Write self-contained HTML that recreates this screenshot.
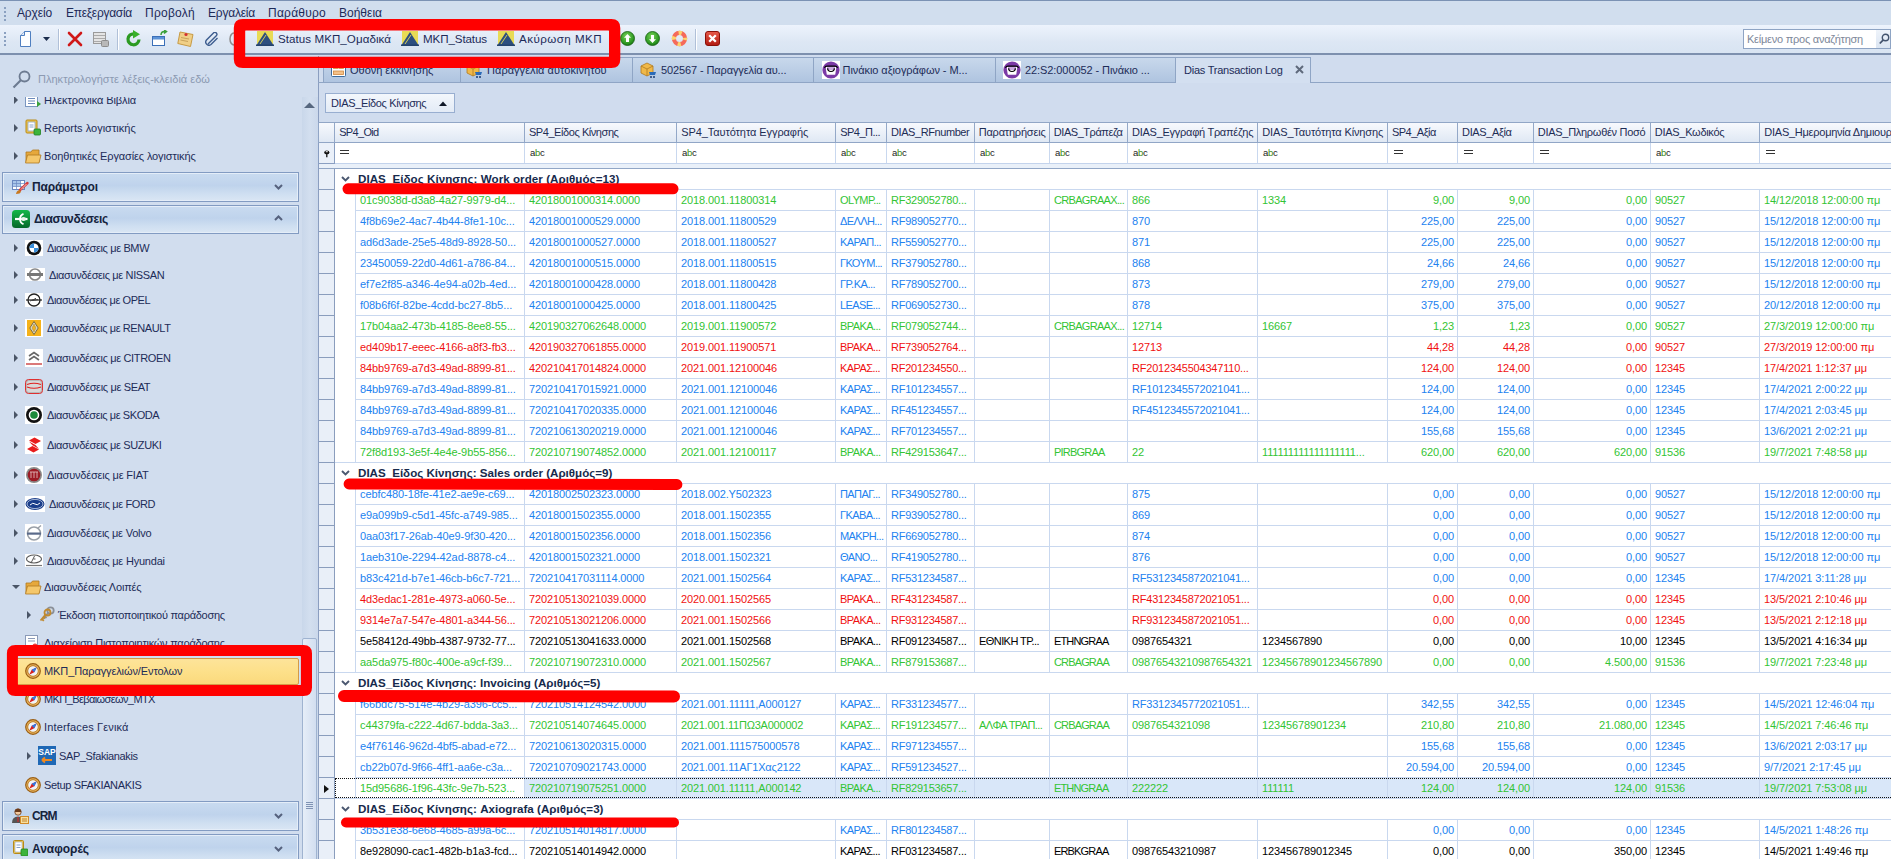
<!DOCTYPE html><html><head><meta charset="utf-8"><style>
*{box-sizing:border-box;margin:0;padding:0}
html,body{width:1891px;height:859px;overflow:hidden}
body{position:relative;background:#d0dcee;font-family:"Liberation Sans",sans-serif;font-size:11px;color:#1e2a3c}
.abs{position:absolute}
#menubar{position:absolute;left:0;top:0;width:1891px;height:25px;background:#d1deee;border-top:1px solid #7b92b4}
.mi{position:absolute;top:5px;font-size:12px;color:#1d2a58;white-space:nowrap;line-height:15px}
.grip{position:absolute;width:2px;background:repeating-linear-gradient(#8aa0c0 0 2px,transparent 2px 4px)}
#toolbar{position:absolute;left:0;top:25px;width:1891px;height:30px;background:linear-gradient(#edf3fc,#dde7f4 60%,#d8e4f2);border-bottom:2px solid #7d90ae}
.tsep{position:absolute;top:4px;width:1px;height:21px;background:#b0c0d8;box-shadow:1px 0 0 #fff}
.tbtxt{position:absolute;top:6px;font-size:11.6px;color:#1d2a58;white-space:nowrap;line-height:15px}
#sidebar{position:absolute;left:0;top:56px;width:318px;height:803px;background:#d1ddee}
.sbt{position:absolute;white-space:nowrap;color:#1d2c58;font-size:11px;line-height:14px}
.arr{position:absolute;width:0;height:0;border-top:4px solid transparent;border-bottom:4px solid transparent;border-left:4px solid #4a5566}
.arrd{position:absolute;width:0;height:0;border-left:4px solid transparent;border-right:4px solid transparent;border-top:4px solid #4a5566}
.nbg{position:absolute;left:2px;width:297px;background:linear-gradient(#c9dbf0 0%,#bfd3ec 45%,#cfdff1 75%,#dae6f4 100%);border:1px solid #829bc2;box-shadow:inset 1px 1px 0 #e4edf8,inset -1px -1px 0 #e4edf8}
.nbg .t{position:absolute;top:7px;font-weight:bold;font-size:11.6px;color:#15233d;white-space:nowrap;line-height:14px}
.chevd{position:absolute;width:5px;height:5px;border-right:2px solid #56627e;border-bottom:2px solid #56627e;transform:rotate(45deg)}
.chevu{position:absolute;width:5px;height:5px;border-left:2px solid #56627e;border-top:2px solid #56627e;transform:rotate(45deg)}
#tabs{position:absolute;left:318px;top:56px;width:1573px;height:27px}
.tab{position:absolute;top:1px;height:25px;background:linear-gradient(#c8d8ec,#afc4e0);border:1px solid #8fa5c5;border-bottom:none;white-space:nowrap;font-size:11px;color:#1d2c58;line-height:14px}
.tab.act{background:#d3dff0;height:26px}
.tab span{position:absolute;top:5px}
#tabline{position:absolute;left:318px;top:82px;width:1573px;height:1px;background:#8fa5c5}
#vline{position:absolute;left:318px;top:56px;width:1px;height:803px;background:#8b9ec0}
#grpbtn{position:absolute;left:325px;top:93px;width:130px;height:20px;border:1px solid #98aed0;background:linear-gradient(#f3f7fc,#e3ebf6)}
#grpbtn span{position:absolute;left:5px;top:3px;font-size:11px;color:#1d2c58;white-space:nowrap;letter-spacing:-0.35px}
#grid{position:absolute;left:319px;top:122px;width:1572px;height:737px;background:#fff}
#hdr{position:absolute;left:318px;top:122px;width:1573px;height:21px;border-top:1px solid #91a6c6;border-bottom:1px solid #91a6c6;background:linear-gradient(#f7f9fd,#dfe8f4)}
.hc{position:absolute;top:0;height:19px;border-left:1px solid #93a8c8;font-size:11px;color:#1e2d55;white-space:nowrap;overflow:hidden;line-height:19px;padding-left:4px;letter-spacing:-0.45px}
#frow{position:absolute;left:318px;top:143px;width:1573px;height:21px;background:#fff;border-bottom:1px solid #c3d3ec}
.fc{position:absolute;top:0;height:20px;border-left:1px solid #c9d8ef;white-space:nowrap;overflow:hidden;padding-left:4px}
.abc{position:absolute;top:5px;left:5px;font-size:9.5px;color:#222;letter-spacing:-0.3px;line-height:10px}
.abc b{font-weight:normal;color:#3a8a10}
.eq{position:absolute;top:7px;left:6px;width:9px;height:4px;border-top:1px solid #333;border-bottom:1px solid #333}
#band{position:absolute;left:319px;top:164px;width:1572px;height:5px;background:#e9f0f9;border-bottom:1px solid #91a6c6}
.grow{position:absolute;left:335px;width:1556px;height:21px;background:#fff}
.grow.ng:before{content:'';position:absolute;left:0;right:0;top:-1px;height:1px;background:#c9d8ef}
.grow:after{content:'';position:absolute;left:20px;right:0;bottom:0;height:1px;background:#c9d8ef}
.grow .gtxt{position:absolute;left:23px;top:3px;font-weight:bold;color:#172a4c;font-size:11.6px;white-space:nowrap;line-height:14px}
.grow .chev{position:absolute;left:6px;top:7px;width:9px;height:6px}
.drow{position:absolute;left:355px;width:1536px;height:21px;border-bottom:1px solid #c9d8ef;background:#fff}
.cell{position:absolute;top:0;height:20px;border-left:1px solid #c9d8ef;white-space:nowrap;overflow:hidden;line-height:20px;padding-left:4px;padding-right:3px}
.cell.r{text-align:right}
.cell.hl{background:#d9e7f9}
.drow.foc{border-bottom:none}
.focline{position:absolute;left:335px;width:1556px;height:1px;border-top:1px dotted #111}
.focside{position:absolute;left:335px;width:1px;height:20px;border-left:1px dotted #111}
.ind{position:absolute;left:319px;width:16px;height:21px;background:#e9eff8;border-bottom:1px solid #8a9dbd;border-right:1px solid #8a9dbd}

.nbt{font-weight:bold;font-size:12px;color:#15233d;white-space:nowrap;line-height:14px}
</style></head><body><div id="menubar">
<div class="grip" style="left:4px;top:6px;height:15px"></div>
<div class="mi" style="left:17px;letter-spacing:-0.138px">Αρχείο</div>
<div class="mi" style="left:66px;letter-spacing:-0.286px">Επεξεργασία</div>
<div class="mi" style="left:145px;letter-spacing:0.259px">Προβολή</div>
<div class="mi" style="left:208px;letter-spacing:-0.217px">Εργαλεία</div>
<div class="mi" style="left:268px;letter-spacing:0.236px">Παράθυρο</div>
<div class="mi" style="left:339px;letter-spacing:0.002px">Βοήθεια</div>
</div>
<div id="toolbar">
<div class="grip" style="left:4px;top:7px;height:16px"></div>
</div>
<svg class="abs" style="left:18px;top:31px" width="15" height="16" viewBox="0 0 15 16"><path d="M2.5 4.5 L6.5 0.5 H12.5 V15.5 H2.5 Z" fill="#fdfeff" stroke="#4f7fc0"/><path d="M2.5 4.5 H6.5 V0.5" fill="#dfe9f7" stroke="#4f7fc0"/></svg>
<svg class="abs" style="left:43px;top:37px" width="7" height="4" viewBox="0 0 7 4"><path d="M0 0 H7 L3.5 4 Z" fill="#1b2d4d"/></svg>
<div class="tsep" style="left:58px;top:29px"></div>
<svg class="abs" style="left:67px;top:31px" width="16" height="16" viewBox="0 0 16 16"><path d="M2 2 L14 14 M14 2 L2 14" stroke="#d01818" stroke-width="2.6" stroke-linecap="round"/></svg>
<svg class="abs" style="left:93px;top:31px" width="16" height="16" viewBox="0 0 16 16"><rect x="0.5" y="1.5" width="12" height="11" fill="#e4e4e4" stroke="#9a9a9a"/><path d="M1 4.5 H12 M1 7.5 H12 M1 10.5 H12" stroke="#aaa"/><rect x="8.5" y="9.5" width="7" height="6" rx="1" fill="#b8b8b8" stroke="#8c8c8c"/></svg>
<div class="tsep" style="left:117px;top:29px"></div>
<svg class="abs" style="left:125px;top:30px" width="18" height="18" viewBox="0 0 18 18"><path d="M14 9.5 A5.5 5.5 0 1 1 9 3.8" fill="none" stroke="#2b9a22" stroke-width="3.2"/><path d="M8 0 L15 4.2 L8 8.5 Z" fill="#38b02a"/></svg>
<svg class="abs" style="left:152px;top:30px" width="17" height="17" viewBox="0 0 17 17"><rect x="0.5" y="6.5" width="12" height="9" fill="#fff" stroke="#3a6fb8"/><rect x="1" y="7" width="11" height="2.5" fill="#5c92d6"/><path d="M9 5 Q9 1.5 12.5 1.5 H14 M12 0 L14.5 1.5 L12 3.5" fill="none" stroke="#3aa03a" stroke-width="1.5"/></svg>
<svg class="abs" style="left:177px;top:31px" width="17" height="16" viewBox="0 0 17 16"><path d="M3 1 L16 3.5 L13.5 15.5 L0.8 12.5 Z" fill="#f0cf86" stroke="#c69a45"/><path d="M4 6.5 L12 8 M3.5 9 L11 10.5" stroke="#c9a25a"/><circle cx="9" cy="3.5" r="1.6" fill="#d23030"/></svg>
<svg class="abs" style="left:205px;top:32px" width="15" height="14" viewBox="0 0 15 14"><path d="M3 12 L11.5 3.5 A2 2 0 0 0 8.7 0.7 L1.5 8 A3.2 3.2 0 0 0 6 12.5 L12.5 6" fill="none" stroke="#3d5d8f" stroke-width="1.4"/></svg>
<svg class="abs" style="left:229px;top:31px" width="6" height="16" viewBox="0 0 6 16"><ellipse cx="5" cy="8" rx="4" ry="6" fill="none" stroke="#8b8b8b" stroke-width="1.5"/></svg>
<svg class="abs" style="left:256px;top:31px" width="18" height="15" viewBox="0 0 18 15"><rect x="1" y="0" width="16" height="15" fill="#e8db55"/><path d="M0 15 L9 1 L18 15 Z" fill="#2d4f7f"/><path d="M4 13 L10 4" stroke="#e8db55" stroke-width="0.9"/><rect x="0" y="13.5" width="18" height="1.5" fill="#24436d"/></svg>
<div class="tbtxt" style="left:278px;top:31px;letter-spacing:0.05px">Status ΜΚΠ_Ομαδικά</div>
<svg class="abs" style="left:401px;top:31px" width="18" height="15" viewBox="0 0 18 15"><rect x="1" y="0" width="16" height="15" fill="#e8db55"/><path d="M0 15 L9 1 L18 15 Z" fill="#2d4f7f"/><path d="M4 13 L10 4" stroke="#e8db55" stroke-width="0.9"/><rect x="0" y="13.5" width="18" height="1.5" fill="#24436d"/></svg>
<div class="tbtxt" style="left:423px;top:31px;letter-spacing:-0.109px">ΜΚΠ_Status</div>
<svg class="abs" style="left:497px;top:31px" width="18" height="15" viewBox="0 0 18 15"><rect x="1" y="0" width="16" height="15" fill="#e8db55"/><path d="M0 15 L9 1 L18 15 Z" fill="#2d4f7f"/><path d="M4 13 L10 4" stroke="#e8db55" stroke-width="0.9"/><rect x="0" y="13.5" width="18" height="1.5" fill="#24436d"/></svg>
<div class="tbtxt" style="left:519px;top:31px;letter-spacing:0.445px">Ακύρωση ΜΚΠ</div>
<svg class="abs" style="left:620px;top:31px" width="15" height="15" viewBox="0 0 15 15"><defs><radialGradient id="gg" cx="0.45" cy="0.35" r="0.7"><stop offset="0" stop-color="#7ad35a"/><stop offset="0.7" stop-color="#2e9a22"/><stop offset="1" stop-color="#156a10"/></radialGradient></defs><circle cx="7.5" cy="7.5" r="7" fill="url(#gg)" stroke="#15600f" stroke-width="0.8"/><path d="M7.5 3 L11 6.8 H9 V11 H6 V6.8 H4 Z" fill="#fff"/></svg>
<svg class="abs" style="left:645px;top:31px" width="15" height="15" viewBox="0 0 15 15"><circle cx="7.5" cy="7.5" r="7" fill="url(#gg)" stroke="#15600f" stroke-width="0.8"/><path d="M7.5 12 L11 8.2 H9 V4 H6 V8.2 H4 Z" fill="#fff"/></svg>
<svg class="abs" style="left:671px;top:30px" width="17" height="17" viewBox="0 0 17 17"><circle cx="8.5" cy="8.5" r="5.6" fill="none" stroke="#f56a5a" stroke-width="4.2"/><circle cx="8.5" cy="8.5" r="5.6" fill="none" stroke="#fbd46e" stroke-width="4.2" stroke-dasharray="3.2 5.6" stroke-dashoffset="1.6"/></svg>
<div class="tsep" style="left:695px;top:29px"></div>
<svg class="abs" style="left:705px;top:31px" width="15" height="15" viewBox="0 0 15 15"><defs><linearGradient id="rg" x1="0" y1="0" x2="0" y2="1"><stop offset="0" stop-color="#e85a4a"/><stop offset="1" stop-color="#b01a10"/></linearGradient></defs><rect x="0.5" y="0.5" width="14" height="14" rx="2.5" fill="url(#rg)" stroke="#8a1008"/><path d="M4.2 4.2 L10.8 10.8 M10.8 4.2 L4.2 10.8" stroke="#fff" stroke-width="2.3"/></svg>
<div class="abs" style="left:1743px;top:29px;width:134px;height:20px;background:#fff;border:1px solid #8ea4c4"></div>
<div class="abs" style="left:1747px;top:32px;font-size:11px;color:#7d8799;white-space:nowrap;line-height:14px;letter-spacing:-0.24px">Κείμενο προς αναζήτηση</div>
<div class="abs" style="left:1876px;top:29px;width:15px;height:20px;background:linear-gradient(#eef3fa,#dbe5f2);border:1px solid #8ea4c4;border-left:none"></div>
<svg class="abs" style="left:1879px;top:33px" width="11" height="12" viewBox="0 0 11 12"><circle cx="6.5" cy="4.5" r="3.2" fill="none" stroke="#44546e" stroke-width="1.4"/><path d="M4.3 6.8 L0.8 10.5" stroke="#44546e" stroke-width="1.8"/></svg>
<div id="sidebar"></div>
<svg class="abs" style="left:12px;top:70px" width="20" height="19" viewBox="0 0 20 19"><circle cx="12.5" cy="6.5" r="5" fill="none" stroke="#6d7b91" stroke-width="1.8"/><path d="M9 10 L1.5 17.5" stroke="#6d7b91" stroke-width="2.2"/></svg>
<div class="sbt" style="left:38px;top:72px;letter-spacing:0.02px;color:#8c9ab2">Πληκτρολογήστε λέξεις-κλειδιά εδώ</div>
<div class="abs" style="left:302px;top:97px;width:16px;height:762px;background:linear-gradient(90deg,#c9d7ea,#d3dfef 50%,#cbd8eb)"></div>
<svg class="abs" style="left:304px;top:102px" width="11" height="7" viewBox="0 0 11 7"><path d="M0 6 L5.5 0.5 L11 6 Z" fill="#56677f"/></svg>
<div class="abs" style="left:302px;top:638px;width:15px;height:230px;background:linear-gradient(90deg,#e6eef8,#d2def0);border:1px solid #9fb3d0;border-radius:2px"></div>
<div class="abs" style="left:306px;top:802px;width:7px;height:1px;background:#7f93b4"></div>
<div class="abs" style="left:306px;top:804px;width:7px;height:1px;background:#7f93b4"></div>
<div class="abs" style="left:306px;top:806px;width:7px;height:1px;background:#7f93b4"></div>
<div class="abs" style="left:306px;top:808px;width:7px;height:1px;background:#7f93b4"></div>
<div class="abs" style="left:0;top:97px;width:300px;height:75px;overflow:hidden">
<div class="arr" style="left:14px;top:-1px"></div>
<svg class="abs" style="left:25px;top:-2px" width="17" height="14" viewBox="0 0 17 14"><rect x="0.5" y="0.5" width="12" height="11" fill="#fff" stroke="#7a96c0"/><path d="M3 3.5 H10 M3 6 H10 M3 8.5 H10" stroke="#6b8abb"/><path d="M12 6 L16 9 L12 12 Z" fill="#3aa23a"/></svg>
<div class="sbt" style="left:44px;top:-4px;letter-spacing:-0.095px">Ηλεκτρονικά Βιβλία</div>
</div>
<div class="arr" style="left:14px;top:124px"></div>
<svg class="abs" style="left:25px;top:119px" width="16" height="17" viewBox="0 0 16 17"><rect x="1" y="1" width="11" height="13" rx="1" fill="#f2c64a" stroke="#b68a1a"/><rect x="3" y="3" width="7" height="9" fill="#fff" stroke="#8aa0c0" stroke-width="0.8"/><path d="M4.5 6 H8.5 M4.5 8 H8.5" stroke="#6b8abb" stroke-width="0.8"/><rect x="9" y="10" width="6.5" height="6" rx="1" fill="#3cb43c" stroke="#1f801f" stroke-width="0.8"/></svg>
<div class="sbt" style="left:44px;top:121px;letter-spacing:0.013px">Reports λογιστικής</div>
<div class="arr" style="left:14px;top:152px"></div>
<svg class="abs" style="left:25px;top:148px" width="17" height="16" viewBox="0 0 17 16"><path d="M1 4 H6 L7.5 2 H14 V14 H1 Z" fill="#e6a83c" stroke="#b07820" stroke-width="0.8"/><path d="M2.5 7 H16 L14 15 H0.5 Z" fill="#f5c76a" stroke="#b07820" stroke-width="0.8"/></svg>
<div class="sbt" style="left:44px;top:149px;letter-spacing:-0.12px">Βοηθητικές Εργασίες λογιστικής</div>
<div class="nbg" style="top:172px;height:30px"></div><svg class="abs" style="left:12px;top:180px" width="17" height="15" viewBox="0 0 17 15"><rect x="0.5" y="0.5" width="12" height="9" fill="#fff" stroke="#6a88c0"/><rect x="1" y="1" width="7.5" height="5.5" fill="#a9c6ea"/><path d="M0.5 3.5 H12.5 M0.5 6.5 H12.5 M4.5 0.5 V9.5 M8.5 0.5 V9.5" stroke="#6a88c0" stroke-width="0.7"/><path d="M8 10 L15.5 3" stroke="#d63a3a" stroke-width="2.4" stroke-linecap="round"/><path d="M9 9.5 L14.5 4" stroke="#fff" stroke-width="0.7"/><path d="M4 14 Q4.5 10.5 7.5 10 L9 11.5 Q8.5 14 4 14 Z" fill="#c8781e"/></svg><div class="abs nbt" style="left:32px;top:180px;letter-spacing:-0.133px;left:32px">Παράμετροι</div><svg class="abs" style="left:274px;top:184px" width="9" height="6" viewBox="0 0 9 6"><path d="M1 1 L4.5 4.5 L8 1" fill="none" stroke="#56627e" stroke-width="2"/></svg>
<div class="nbg" style="top:205px;height:29px"></div><svg class="abs" style="left:12px;top:210px" width="18" height="18" viewBox="0 0 18 18"><defs><linearGradient id="dg" x1="0" y1="0" x2="0" y2="1"><stop offset="0" stop-color="#14b848"/><stop offset="1" stop-color="#04682a"/></linearGradient></defs><rect x="0" y="0" width="18" height="18" rx="3.5" fill="url(#dg)"/><path d="M11.5 3.8 A5.6 5.6 0 0 0 11.5 14.2" fill="none" stroke="#fff" stroke-width="1.8"/><path d="M3 9 H15.5" stroke="#fff" stroke-width="2.2"/><ellipse cx="11.5" cy="9" rx="2.6" ry="2" fill="#e8f4ea"/></svg><div class="abs nbt" style="left:32px;top:212px;letter-spacing:-0.281px;left:34px">Διασυνδέσεις</div><svg class="abs" style="left:274px;top:215px" width="9" height="6" viewBox="0 0 9 6"><path d="M1 5 L4.5 1.5 L8 5" fill="none" stroke="#56627e" stroke-width="2"/></svg>
<div class="arr" style="left:14px;top:244px"></div>
<svg class="abs" style="left:25px;top:240px" width="18" height="16" viewBox="0 0 18 16"><rect width="18" height="16" fill="#fff"/><circle cx="9" cy="8" r="7.3" fill="#111"/><circle cx="9" cy="8" r="4.6" fill="#fff"/><path d="M9 8 H4.4 A4.6 4.6 0 0 1 9 3.4 Z M9 8 H13.6 A4.6 4.6 0 0 1 9 12.6 Z" fill="#3a8ed8"/></svg>
<div class="sbt" style="left:47px;top:241px;letter-spacing:-0.367px">Διασυνδέσεις με BMW</div>
<div class="arr" style="left:14px;top:271px"></div>
<svg class="abs" style="left:25px;top:268px" width="20" height="13" viewBox="0 0 20 13"><rect width="20" height="13" fill="#fff"/><circle cx="10" cy="6.5" r="5.5" fill="none" stroke="#888" stroke-width="1.6"/><rect x="2" y="5" width="16" height="3" fill="#777"/></svg>
<div class="sbt" style="left:49px;top:268px;letter-spacing:-0.356px">Διασυνδέσεις με NISSAN</div>
<div class="arr" style="left:14px;top:296px"></div>
<svg class="abs" style="left:25px;top:293px" width="18" height="14" viewBox="0 0 18 14"><rect width="18" height="14" fill="#fff"/><circle cx="9" cy="7" r="6" fill="none" stroke="#222" stroke-width="1.3"/><path d="M1 7 H17" stroke="#222" stroke-width="1.2"/><path d="M5 8 L11 5.5 L8 7.5 L13 6.5" stroke="#444" stroke-width="1"/></svg>
<div class="sbt" style="left:47px;top:293px;letter-spacing:-0.421px">Διασυνδέσεις με OPEL</div>
<div class="arr" style="left:14px;top:324px"></div>
<svg class="abs" style="left:25px;top:319px" width="18" height="18" viewBox="0 0 18 18"><rect width="18" height="18" fill="#fff"/><rect x="2" y="1" width="14" height="16" fill="#f5b21a"/><path d="M9 2.5 L13.2 9 L9 15.5 L4.8 9 Z" fill="#e8e2cc" stroke="#7a6a40" stroke-width="1"/><path d="M9 5 L11 9 L9 13 L7 9 Z" fill="#f5b21a" stroke="#9a8a5a" stroke-width="0.6"/></svg>
<div class="sbt" style="left:47px;top:321px;letter-spacing:-0.405px">Διασυνδέσεις με RENAULT</div>
<div class="arr" style="left:14px;top:354px"></div>
<svg class="abs" style="left:25px;top:349px" width="18" height="18" viewBox="0 0 18 18"><rect width="18" height="18" fill="#fff"/><path d="M4 7 L9 3.5 L14 7 M4 11 L9 7.5 L14 11" stroke="#666" stroke-width="1.6" fill="none"/><path d="M1 15 H17" stroke="#c83030" stroke-width="1.3"/></svg>
<div class="sbt" style="left:47px;top:351px;letter-spacing:-0.36px">Διασυνδέσεις με CITROEN</div>
<div class="arr" style="left:14px;top:383px"></div>
<svg class="abs" style="left:25px;top:379px" width="18" height="15" viewBox="0 0 18 15"><rect x="0.5" y="0.5" width="17" height="14" rx="3" fill="#b8b8b8" stroke="#e03030"/><rect x="2" y="2" width="14" height="11" rx="2" fill="#d8d8d8"/><path d="M2 5.5 Q9 3 16 5.5 M2 8 Q9 10.5 16 8" stroke="#e02020" stroke-width="1.2" fill="none"/></svg>
<div class="sbt" style="left:47px;top:380px;letter-spacing:-0.35px">Διασυνδέσεις με SEAT</div>
<div class="arr" style="left:14px;top:411px"></div>
<svg class="abs" style="left:25px;top:406px" width="18" height="18" viewBox="0 0 18 18"><rect width="18" height="18" fill="#fff"/><circle cx="9" cy="9" r="8" fill="#111"/><circle cx="9" cy="9" r="5.3" fill="#fff"/><circle cx="9" cy="9" r="3.8" fill="#1b8a3a"/></svg>
<div class="sbt" style="left:47px;top:408px;letter-spacing:-0.405px">Διασυνδέσεις με SKODA</div>
<div class="arr" style="left:14px;top:441px"></div>
<svg class="abs" style="left:25px;top:436px" width="18" height="18" viewBox="0 0 18 18"><rect width="18" height="18" fill="#fff"/><path d="M9.5 1.5 L16 5 L10.5 8 L4 4.5 Z M8.5 16.5 L2 13 L7.5 10 L14 13.5 Z M4 5.5 L10.5 9 L14 13 L7.5 9.2 Z" fill="#e81c1c"/></svg>
<div class="sbt" style="left:47px;top:438px;letter-spacing:-0.374px">Διασυνδέσεις με SUZUKI</div>
<div class="arr" style="left:14px;top:471px"></div>
<svg class="abs" style="left:25px;top:466px" width="18" height="18" viewBox="0 0 18 18"><rect width="18" height="18" fill="#fff"/><circle cx="9" cy="9" r="8" fill="#8a8a8a"/><circle cx="9" cy="9" r="6.3" fill="#9c1a24"/><path d="M5 6 H13 M6 6 V12 M9 6 V12 M12 6 V12" stroke="#e8c8c8" stroke-width="0.8"/></svg>
<div class="sbt" style="left:47px;top:468px;letter-spacing:-0.185px">Διασυνδέσεις με FIAT</div>
<div class="arr" style="left:14px;top:500px"></div>
<svg class="abs" style="left:25px;top:496px" width="20" height="16" viewBox="0 0 20 16"><rect width="20" height="16" fill="#fff"/><ellipse cx="10" cy="8" rx="9.5" ry="6" fill="#1a3d8a"/><ellipse cx="10" cy="8" rx="8" ry="4.6" fill="none" stroke="#c8d4ea" stroke-width="0.8"/><path d="M5 9 Q8 6 10 8 Q12 10 15 7" stroke="#fff" stroke-width="1" fill="none"/></svg>
<div class="sbt" style="left:49px;top:497px;letter-spacing:-0.362px">Διασυνδέσεις με FORD</div>
<div class="arr" style="left:14px;top:529px"></div>
<svg class="abs" style="left:25px;top:524px" width="18" height="18" viewBox="0 0 18 18"><rect width="18" height="18" fill="#fff"/><circle cx="9" cy="9.5" r="6.5" fill="none" stroke="#9aa0a8" stroke-width="1.6"/><rect x="2" y="8.5" width="14" height="2.2" fill="#5a6a8a"/><path d="M13 4 L16 1.5" stroke="#9aa0a8" stroke-width="1.4"/></svg>
<div class="sbt" style="left:47px;top:526px;letter-spacing:-0.228px">Διασυνδέσεις με Volvo</div>
<div class="arr" style="left:14px;top:557px"></div>
<svg class="abs" style="left:25px;top:554px" width="18" height="13" viewBox="0 0 18 13"><rect width="18" height="13" fill="#fff"/><ellipse cx="9" cy="5" rx="7.5" ry="4" fill="none" stroke="#555" stroke-width="1.1"/><path d="M6.5 8 L9.5 2 M8.5 5 H10.5" stroke="#555" stroke-width="1"/><path d="M1 11.5 H17" stroke="#777" stroke-width="1.2"/></svg>
<div class="sbt" style="left:47px;top:554px;letter-spacing:-0.21px">Διασυνδέσεις με Hyundai</div>
<div class="arrd" style="left:12px;top:585px"></div>
<svg class="abs" style="left:25px;top:580px" width="17" height="15" viewBox="0 0 17 15"><path d="M1 3 H6 L7.5 1 H14 V13 H1 Z" fill="#e6a83c" stroke="#b07820" stroke-width="0.8"/><path d="M2.5 6 H16 L14 14 H0.5 Z" fill="#f5c76a" stroke="#b07820" stroke-width="0.8"/></svg>
<div class="sbt" style="left:44px;top:580px;letter-spacing:-0.194px">Διασυνδέσεις Λοιπές</div>
<div class="arr" style="left:27px;top:611px"></div>
<svg class="abs" style="left:39px;top:606px" width="16" height="17" viewBox="0 0 16 17"><circle cx="11.5" cy="4.5" r="3.2" fill="none" stroke="#8a8f98" stroke-width="1.8"/><path d="M9.3 6.8 L4 12.5 M6 10.5 L7.5 12" stroke="#8a8f98" stroke-width="1.8"/><circle cx="8.5" cy="6.5" r="3" fill="none" stroke="#c08a30" stroke-width="1.8"/><path d="M6.5 8.7 L1.5 14.5 M3 13 L4.8 14.8 M4.5 11 L6 12.5" stroke="#c08a30" stroke-width="1.8"/></svg>
<div class="sbt" style="left:58px;top:608px;letter-spacing:-0.28px">Έκδοση πιστοποιητικού παράδοσης</div>
<svg class="abs" style="left:25px;top:635px" width="15" height="14" viewBox="0 0 15 14"><rect x="0.5" y="0.5" width="12" height="13" fill="#fff" stroke="#8a9ab8"/><path d="M3 3.5 H10 M3 6 H10" stroke="#8a9ab8"/><circle cx="10" cy="11" r="2.5" fill="#e84040"/></svg>
<div class="sbt" style="left:44px;top:636px;letter-spacing:-0.25px">Διαχείριση Πιστοποιητικών παράδοσης</div>
<div class="abs" style="left:14px;top:656px;width:288px;height:30px;background:#cfe0f2"></div>
<div class="abs" style="left:14px;top:658px;width:285px;height:27px;background:linear-gradient(#fde49a,#fde08a 50%,#fbd97c);border:1px solid #d49a48;border-radius:2px"></div>
<svg class="abs" style="left:25px;top:663px" width="16" height="16" viewBox="0 0 16 16"><circle cx="8" cy="8" r="7.3" fill="#e9b45a" stroke="#9a5e14" stroke-width="1.2"/><circle cx="8" cy="8" r="5.3" fill="#fff4dc" stroke="#b07424" stroke-width="0.9"/><circle cx="8" cy="8" r="4.2" fill="#eef3fa"/><path d="M11.8 4.2 L9.3 9.3 L4.2 11.8 L6.7 6.7 Z" fill="#d82020"/><path d="M11.8 4.2 L6.7 6.7 L9.3 9.3 Z" fill="#2a7ae8"/></svg>
<div class="sbt" style="left:44px;top:664px;letter-spacing:-0.106px">ΜΚΠ_Παραγγελιών/Εντολων</div>
<svg class="abs" style="left:25px;top:691px" width="16" height="16" viewBox="0 0 16 16"><circle cx="8" cy="8" r="7.3" fill="#e9b45a" stroke="#9a5e14" stroke-width="1.2"/><circle cx="8" cy="8" r="5.3" fill="#fff4dc" stroke="#b07424" stroke-width="0.9"/><circle cx="8" cy="8" r="4.2" fill="#eef3fa"/><path d="M11.8 4.2 L9.3 9.3 L4.2 11.8 L6.7 6.7 Z" fill="#d82020"/><path d="M11.8 4.2 L6.7 6.7 L9.3 9.3 Z" fill="#2a7ae8"/></svg>
<div class="sbt" style="left:44px;top:692px;letter-spacing:-0.602px">ΜΚΠ_Βεβαιώσεων_ΜΤΧ</div>
<svg class="abs" style="left:25px;top:719px" width="16" height="16" viewBox="0 0 16 16"><circle cx="8" cy="8" r="7.3" fill="#e9b45a" stroke="#9a5e14" stroke-width="1.2"/><circle cx="8" cy="8" r="5.3" fill="#fff4dc" stroke="#b07424" stroke-width="0.9"/><circle cx="8" cy="8" r="4.2" fill="#eef3fa"/><path d="M11.8 4.2 L9.3 9.3 L4.2 11.8 L6.7 6.7 Z" fill="#d82020"/><path d="M11.8 4.2 L6.7 6.7 L9.3 9.3 Z" fill="#2a7ae8"/></svg>
<div class="sbt" style="left:44px;top:720px;letter-spacing:0.153px">Interfaces Γενικά</div>
<div class="arr" style="left:27px;top:752px"></div>
<svg class="abs" style="left:38px;top:746px" width="18" height="19" viewBox="0 0 18 19"><rect x="0" y="0" width="18" height="19" fill="#1f68b5"/><text x="9" y="9" font-family="Liberation Sans" font-weight="bold" font-size="8.5" fill="#fff" text-anchor="middle">SAP</text><path d="M4 14 H14 M4 14 L7 11.5 M4 14 L7 16.5" stroke="#f08a20" stroke-width="1.8" fill="none"/></svg>
<div class="sbt" style="left:59px;top:749px;letter-spacing:-0.386px">SAP_Sfakianakis</div>
<svg class="abs" style="left:25px;top:777px" width="16" height="16" viewBox="0 0 16 16"><circle cx="8" cy="8" r="7.3" fill="#e9b45a" stroke="#9a5e14" stroke-width="1.2"/><circle cx="8" cy="8" r="5.3" fill="#fff4dc" stroke="#b07424" stroke-width="0.9"/><circle cx="8" cy="8" r="4.2" fill="#eef3fa"/><path d="M11.8 4.2 L9.3 9.3 L4.2 11.8 L6.7 6.7 Z" fill="#d82020"/><path d="M11.8 4.2 L6.7 6.7 L9.3 9.3 Z" fill="#2a7ae8"/></svg>
<div class="sbt" style="left:44px;top:778px;letter-spacing:-0.35px">Setup SFAKIANAKIS</div>
<div class="nbg" style="top:801px;height:30px"></div><svg class="abs" style="left:12px;top:808px" width="17" height="16" viewBox="0 0 17 16"><circle cx="6" cy="4" r="3.2" fill="#f2c9a0" stroke="#6a3a1a" stroke-width="0.8"/><path d="M6 0.8 A3.2 3.2 0 0 1 9.2 4 H2.8 A3.2 3.2 0 0 1 6 0.8" fill="#6a3a1a"/><path d="M0 15 Q0 8.5 6 8.5 Q12 8.5 12 15 Z" fill="#555"/><path d="M6 9 V14" stroke="#c03030" stroke-width="1.4"/><rect x="8.5" y="8.5" width="8" height="7" fill="#f7e0a0" stroke="#d08a2a"/><path d="M10 11 H15 M10 13 H15" stroke="#c0802a"/></svg><div class="abs nbt" style="left:32px;top:809px;letter-spacing:-0.909px;left:32px">CRM</div><svg class="abs" style="left:274px;top:813px" width="9" height="6" viewBox="0 0 9 6"><path d="M1 1 L4.5 4.5 L8 1" fill="none" stroke="#56627e" stroke-width="2"/></svg>
<div class="nbg" style="top:834px;height:30px"></div><svg class="abs" style="left:13px;top:840px" width="15" height="16" viewBox="0 0 15 16"><rect x="0.5" y="0.5" width="10" height="13" rx="1" fill="#f2c64a" stroke="#b68a1a"/><rect x="2" y="2" width="7" height="10" fill="#fff" stroke="#8aa0c0" stroke-width="0.6"/><path d="M3.5 5 H7.5 M3.5 7.5 H7.5" stroke="#6b8abb" stroke-width="0.8"/><rect x="8" y="9" width="7" height="7" rx="1" fill="#3cb43c" stroke="#1f801f" stroke-width="0.8"/></svg><div class="abs nbt" style="left:32px;top:842px;letter-spacing:-0.033px;left:32px">Αναφορές</div><svg class="abs" style="left:274px;top:846px" width="9" height="6" viewBox="0 0 9 6"><path d="M1 1 L4.5 4.5 L8 1" fill="none" stroke="#56627e" stroke-width="2"/></svg>
<div id="vline"></div>
<div id="tabline"></div>
<div class="tab" style="left:323px;width:138px;top:57px"><span style="left:26px;letter-spacing:-0.016px">Οθόνη εκκίνησης</span></div>
<div class="tab" style="left:460px;width:173px;top:57px"><span style="left:26px;letter-spacing:0.039px">Παραγγελία αυτοκινήτου</span></div>
<div class="tab" style="left:632px;width:182px;top:57px"><span style="left:28px;letter-spacing:-0.113px">502567 - Παραγγελία αυ...</span></div>
<div class="tab" style="left:813px;width:183px;top:57px"><span style="left:28.5px;letter-spacing:-0.066px">Πινάκιο αξιογράφων - Μ...</span></div>
<div class="tab" style="left:995px;width:181px;top:57px"><span style="left:29px;letter-spacing:-0.082px">22:S2:000052 - Πινάκιο ...</span></div>
<div class="tab act" style="left:1175px;width:136px;top:57px"><span style="left:8px;letter-spacing:-0.237px">Dias Transaction Log</span></div>
<svg class="abs" style="left:331px;top:62px" width="15" height="15" viewBox="0 0 15 15"><rect x="0.5" y="0.5" width="14" height="14" rx="1" fill="#fff" stroke="#3d6b9c"/><rect x="2.5" y="3" width="4.5" height="3.5" fill="#f4c088" stroke="#d08840" stroke-width="0.8"/><rect x="8" y="3" width="4.5" height="3.5" fill="#f4c088" stroke="#d08840" stroke-width="0.8"/><rect x="2.5" y="9" width="10" height="3.5" fill="#f4c088" stroke="#d08840" stroke-width="0.8"/></svg>
<svg class="abs" style="left:466px;top:62px" width="17" height="16" viewBox="0 0 17 16"><path d="M1 4 L7 1 L13 4 V11 L7 14 L1 11 Z" fill="#f0b848" stroke="#b07a20" stroke-width="0.8"/><path d="M1 4 L7 7 L13 4 M7 7 V14" stroke="#b07a20" stroke-width="0.8" fill="none"/><path d="M9 10 H16 L15 13 H10 Z" fill="#2a6ab8"/><circle cx="11" cy="15" r="1" fill="#1a3a70"/><circle cx="14" cy="15" r="1" fill="#1a3a70"/></svg>
<svg class="abs" style="left:640px;top:62px" width="17" height="16" viewBox="0 0 17 16"><path d="M1 4 L7 1 L13 4 V11 L7 14 L1 11 Z" fill="#f0b848" stroke="#b07a20" stroke-width="0.8"/><path d="M1 4 L7 7 L13 4 M7 7 V14" stroke="#b07a20" stroke-width="0.8" fill="none"/><path d="M9 10 H16 L15 13 H10 Z" fill="#2a6ab8"/><circle cx="11" cy="15" r="1" fill="#1a3a70"/><circle cx="14" cy="15" r="1" fill="#1a3a70"/></svg>
<svg class="abs" style="left:822px;top:61px" width="18" height="18" viewBox="0 0 18 18"><rect width="18" height="18" fill="#fff"/><circle cx="9" cy="9" r="8.6" fill="#7b3aa6"/><path d="M3.5 5.8 H14.5 L13.2 13.8 H4.8 Z" fill="#fff"/><rect x="5" y="6" width="8" height="3" fill="#c9a8e0"/><path d="M2.6 7 Q3 5.2 5 5.2 H13 Q15 5.2 15.4 7" fill="none" stroke="#000" stroke-width="1.2"/><path d="M5.7 7.3 Q5.7 10.5 9 10.5 Q12.3 10.5 12.3 7.3" fill="none" stroke="#000" stroke-width="1.2"/></svg>
<svg class="abs" style="left:1003px;top:61px" width="18" height="18" viewBox="0 0 18 18"><rect width="18" height="18" fill="#fff"/><circle cx="9" cy="9" r="8.6" fill="#7b3aa6"/><path d="M3.5 5.8 H14.5 L13.2 13.8 H4.8 Z" fill="#fff"/><rect x="5" y="6" width="8" height="3" fill="#c9a8e0"/><path d="M2.6 7 Q3 5.2 5 5.2 H13 Q15 5.2 15.4 7" fill="none" stroke="#000" stroke-width="1.2"/><path d="M5.7 7.3 Q5.7 10.5 9 10.5 Q12.3 10.5 12.3 7.3" fill="none" stroke="#000" stroke-width="1.2"/></svg>
<svg class="abs" style="left:1295px;top:65px" width="9" height="9" viewBox="0 0 9 9"><path d="M1 1 L8 8 M8 1 L1 8" stroke="#5f6a7c" stroke-width="2"/></svg>
<div id="grpbtn"><span style="letter-spacing:-0.36px">DIAS_Είδος Κίνησης</span></div>
<svg class="abs" style="left:439px;top:101px" width="8" height="5" viewBox="0 0 8 5"><path d="M0 5 L4 0.5 L8 5 Z" fill="#101828"/></svg>
<div id="grid"></div>
<div id="hdr">
<div class="hc" style="left:0px;width:16px;border-left:1px solid #91a6c6"></div>
<div class="hc" style="left:16px;width:190px;letter-spacing:-0.676px;padding-left:4.2px">SP4_Oid</div>
<div class="hc" style="left:206px;width:152px;letter-spacing:-0.43px;padding-left:3.9px">SP4_Είδος Κίνησης</div>
<div class="hc" style="left:358px;width:159px;letter-spacing:-0.077px;padding-left:4.2px">SP4_Ταυτότητα Εγγραφής</div>
<div class="hc" style="left:517px;width:51px;letter-spacing:-0.554px;padding-left:4.3px">SP4_Π...</div>
<div class="hc" style="left:568px;width:88px;letter-spacing:-0.42px;padding-left:4.0px">DIAS_RFnumber</div>
<div class="hc" style="left:656px;width:75px;letter-spacing:-0.2px;padding-left:3.7px">Παρατηρήσεις</div>
<div class="hc" style="left:731px;width:78px;letter-spacing:-0.451px;padding-left:3.8px">DIAS_Τράπεζα</div>
<div class="hc" style="left:809px;width:130px;letter-spacing:-0.27px;padding-left:4.1px">DIAS_Εγγραφή Τραπέζης</div>
<div class="hc" style="left:939px;width:130px;letter-spacing:-0.121px;padding-left:4.2px">DIAS_Ταυτότητα Κίνησης</div>
<div class="hc" style="left:1069px;width:70px;letter-spacing:-0.498px;padding-left:3.9px">SP4_Αξία</div>
<div class="hc" style="left:1139px;width:76px;letter-spacing:-0.384px;padding-left:4.1px">DIAS_Αξία</div>
<div class="hc" style="left:1215px;width:117px;letter-spacing:-0.286px;padding-left:3.8px">DIAS_Πληρωθέν Ποσό</div>
<div class="hc" style="left:1332px;width:109px;letter-spacing:-0.286px;padding-left:3.8px">DIAS_Κωδικός</div>
<div class="hc" style="left:1441px;width:141px;letter-spacing:-0.25px;padding-left:4.3px">DIAS_Ημερομηνία Δημιουργίας</div>
</div>
<div id="frow">
<div class="fc" style="left:0px;width:17px;height:21px;background:#eaf0f9;border-left:1px solid #8a9fc2;border-right:1px solid #8a9fc2;border-bottom:1px solid #8a9fc2"></div>
<svg class="abs" style="left:6px;top:7px" width="6" height="8" viewBox="0 0 6 8"><ellipse cx="2.8" cy="2.4" rx="2.6" ry="1.9" fill="#111"/><ellipse cx="2.8" cy="1.7" rx="1.2" ry="0.6" fill="#ddd"/><path d="M2.8 3.5 V7.2" stroke="#111" stroke-width="1.3"/></svg>
<div class="fc" style="left:16px;width:190px;border-left:none"><div class="eq"></div></div>
<div class="fc" style="left:206px;width:152px"><div class="abc">a<b>b</b>c</div></div>
<div class="fc" style="left:358px;width:159px"><div class="abc">a<b>b</b>c</div></div>
<div class="fc" style="left:517px;width:51px"><div class="abc">a<b>b</b>c</div></div>
<div class="fc" style="left:568px;width:88px"><div class="abc">a<b>b</b>c</div></div>
<div class="fc" style="left:656px;width:75px"><div class="abc">a<b>b</b>c</div></div>
<div class="fc" style="left:731px;width:78px"><div class="abc">a<b>b</b>c</div></div>
<div class="fc" style="left:809px;width:130px"><div class="abc">a<b>b</b>c</div></div>
<div class="fc" style="left:939px;width:130px"><div class="abc">a<b>b</b>c</div></div>
<div class="fc" style="left:1069px;width:70px"><div class="eq"></div></div>
<div class="fc" style="left:1139px;width:76px"><div class="eq"></div></div>
<div class="fc" style="left:1215px;width:117px"><div class="eq"></div></div>
<div class="fc" style="left:1332px;width:109px"><div class="abc">a<b>b</b>c</div></div>
<div class="fc" style="left:1441px;width:141px"><div class="eq"></div></div>
</div>
<div id="band"></div>
<div class="ind" style="top:169px"></div>
<div class="ind" style="top:190px"></div>
<div class="ind" style="top:211px"></div>
<div class="ind" style="top:232px"></div>
<div class="ind" style="top:253px"></div>
<div class="ind" style="top:274px"></div>
<div class="ind" style="top:295px"></div>
<div class="ind" style="top:316px"></div>
<div class="ind" style="top:337px"></div>
<div class="ind" style="top:358px"></div>
<div class="ind" style="top:379px"></div>
<div class="ind" style="top:400px"></div>
<div class="ind" style="top:421px"></div>
<div class="ind" style="top:442px"></div>
<div class="ind" style="top:463px"></div>
<div class="ind" style="top:484px"></div>
<div class="ind" style="top:505px"></div>
<div class="ind" style="top:526px"></div>
<div class="ind" style="top:547px"></div>
<div class="ind" style="top:568px"></div>
<div class="ind" style="top:589px"></div>
<div class="ind" style="top:610px"></div>
<div class="ind" style="top:631px"></div>
<div class="ind" style="top:652px"></div>
<div class="ind" style="top:673px"></div>
<div class="ind" style="top:694px"></div>
<div class="ind" style="top:715px"></div>
<div class="ind" style="top:736px"></div>
<div class="ind" style="top:757px"></div>
<div class="ind" style="top:778px"></div>
<div class="ind" style="top:799px"></div>
<div class="ind" style="top:820px"></div>
<div class="ind" style="top:841px"></div>
<div class="grow" style="top:169px"><svg class="chev" width="9" height="6" viewBox="0 0 9 6"><path d="M1 1 L4.5 4.5 L8 1" fill="none" stroke="#4b5870" stroke-width="1.9"/></svg><span class="gtxt" style="letter-spacing:0.051px">DIAS_Είδος Κίνησης: Work order (Αριθμός=13)</span></div>
<div class="drow" style="top:190px;color:#33c433">
<div class="cell" style="left:0px;width:169px;letter-spacing:-0.09px">01c9038d-d3a8-4a27-9979-d4...</div>
<div class="cell" style="left:169px;width:152px;letter-spacing:-0.116px">42018001000314.0000</div>
<div class="cell" style="left:321px;width:159px;letter-spacing:-0.108px">2018.001.11800314</div>
<div class="cell" style="left:480px;width:51px;letter-spacing:-0.611px">OLYMP...</div>
<div class="cell" style="left:531px;width:88px;letter-spacing:-0.24px">RF329052780...</div>
<div class="cell" style="left:619px;width:75px"></div>
<div class="cell" style="left:694px;width:78px;letter-spacing:-0.687px">CRBAGRAAX...</div>
<div class="cell" style="left:772px;width:130px;letter-spacing:-0.122px">866</div>
<div class="cell" style="left:902px;width:130px;letter-spacing:-0.122px">1334</div>
<div class="cell r" style="left:1032px;width:70px;letter-spacing:-0.092px">9,00</div>
<div class="cell r" style="left:1102px;width:76px;letter-spacing:-0.092px">9,00</div>
<div class="cell r" style="left:1178px;width:117px;letter-spacing:-0.092px">0,00</div>
<div class="cell" style="left:1295px;width:109px;letter-spacing:-0.122px">90527</div>
<div class="cell" style="left:1404px;width:132px;letter-spacing:-0.078px">14/12/2018 12:00:00 πμ</div>
</div>
<div class="drow" style="top:211px;color:#2282f0">
<div class="cell" style="left:0px;width:169px;letter-spacing:-0.079px">4f8b69e2-4ac7-4b44-8fe1-10c...</div>
<div class="cell" style="left:169px;width:152px;letter-spacing:-0.116px">42018001000529.0000</div>
<div class="cell" style="left:321px;width:159px;letter-spacing:-0.108px">2018.001.11800529</div>
<div class="cell" style="left:480px;width:51px;letter-spacing:-0.594px">ΔΕΛΛΗ...</div>
<div class="cell" style="left:531px;width:88px;letter-spacing:-0.24px">RF989052770...</div>
<div class="cell" style="left:619px;width:75px"></div>
<div class="cell" style="left:694px;width:78px"></div>
<div class="cell" style="left:772px;width:130px;letter-spacing:-0.122px">870</div>
<div class="cell" style="left:902px;width:130px"></div>
<div class="cell r" style="left:1032px;width:70px;letter-spacing:-0.102px">225,00</div>
<div class="cell r" style="left:1102px;width:76px;letter-spacing:-0.102px">225,00</div>
<div class="cell r" style="left:1178px;width:117px;letter-spacing:-0.092px">0,00</div>
<div class="cell" style="left:1295px;width:109px;letter-spacing:-0.122px">90527</div>
<div class="cell" style="left:1404px;width:132px;letter-spacing:-0.078px">15/12/2018 12:00:00 πμ</div>
</div>
<div class="drow" style="top:232px;color:#2282f0">
<div class="cell" style="left:0px;width:169px;letter-spacing:-0.081px">ad6d3ade-25e5-48d9-8928-50...</div>
<div class="cell" style="left:169px;width:152px;letter-spacing:-0.116px">42018001000527.0000</div>
<div class="cell" style="left:321px;width:159px;letter-spacing:-0.108px">2018.001.11800527</div>
<div class="cell" style="left:480px;width:51px;letter-spacing:-0.594px">ΚΑΡΑΠ...</div>
<div class="cell" style="left:531px;width:88px;letter-spacing:-0.24px">RF559052770...</div>
<div class="cell" style="left:619px;width:75px"></div>
<div class="cell" style="left:694px;width:78px"></div>
<div class="cell" style="left:772px;width:130px;letter-spacing:-0.122px">871</div>
<div class="cell" style="left:902px;width:130px"></div>
<div class="cell r" style="left:1032px;width:70px;letter-spacing:-0.102px">225,00</div>
<div class="cell r" style="left:1102px;width:76px;letter-spacing:-0.102px">225,00</div>
<div class="cell r" style="left:1178px;width:117px;letter-spacing:-0.092px">0,00</div>
<div class="cell" style="left:1295px;width:109px;letter-spacing:-0.122px">90527</div>
<div class="cell" style="left:1404px;width:132px;letter-spacing:-0.078px">15/12/2018 12:00:00 πμ</div>
</div>
<div class="drow" style="top:253px;color:#2282f0">
<div class="cell" style="left:0px;width:169px;letter-spacing:-0.102px">23450059-22d0-4d61-a786-84...</div>
<div class="cell" style="left:169px;width:152px;letter-spacing:-0.116px">42018001000515.0000</div>
<div class="cell" style="left:321px;width:159px;letter-spacing:-0.108px">2018.001.11800515</div>
<div class="cell" style="left:480px;width:51px;letter-spacing:-0.61px">ΓΚΟΥΜ...</div>
<div class="cell" style="left:531px;width:88px;letter-spacing:-0.24px">RF379052780...</div>
<div class="cell" style="left:619px;width:75px"></div>
<div class="cell" style="left:694px;width:78px"></div>
<div class="cell" style="left:772px;width:130px;letter-spacing:-0.122px">868</div>
<div class="cell" style="left:902px;width:130px"></div>
<div class="cell r" style="left:1032px;width:70px;letter-spacing:-0.098px">24,66</div>
<div class="cell r" style="left:1102px;width:76px;letter-spacing:-0.098px">24,66</div>
<div class="cell r" style="left:1178px;width:117px;letter-spacing:-0.092px">0,00</div>
<div class="cell" style="left:1295px;width:109px;letter-spacing:-0.122px">90527</div>
<div class="cell" style="left:1404px;width:132px;letter-spacing:-0.078px">15/12/2018 12:00:00 πμ</div>
</div>
<div class="drow" style="top:274px;color:#2282f0">
<div class="cell" style="left:0px;width:169px;letter-spacing:-0.075px">ef7e2f85-a346-4e94-a02b-4ed...</div>
<div class="cell" style="left:169px;width:152px;letter-spacing:-0.116px">42018001000428.0000</div>
<div class="cell" style="left:321px;width:159px;letter-spacing:-0.108px">2018.001.11800428</div>
<div class="cell" style="left:480px;width:51px;letter-spacing:-0.467px">ΓΡ.ΚΑ...</div>
<div class="cell" style="left:531px;width:88px;letter-spacing:-0.24px">RF789052700...</div>
<div class="cell" style="left:619px;width:75px"></div>
<div class="cell" style="left:694px;width:78px"></div>
<div class="cell" style="left:772px;width:130px;letter-spacing:-0.122px">873</div>
<div class="cell" style="left:902px;width:130px"></div>
<div class="cell r" style="left:1032px;width:70px;letter-spacing:-0.102px">279,00</div>
<div class="cell r" style="left:1102px;width:76px;letter-spacing:-0.102px">279,00</div>
<div class="cell r" style="left:1178px;width:117px;letter-spacing:-0.092px">0,00</div>
<div class="cell" style="left:1295px;width:109px;letter-spacing:-0.122px">90527</div>
<div class="cell" style="left:1404px;width:132px;letter-spacing:-0.078px">15/12/2018 12:00:00 πμ</div>
</div>
<div class="drow" style="top:295px;color:#2282f0">
<div class="cell" style="left:0px;width:169px;letter-spacing:-0.066px">f08b6f6f-82be-4cdd-bc27-8b5...</div>
<div class="cell" style="left:169px;width:152px;letter-spacing:-0.116px">42018001000425.0000</div>
<div class="cell" style="left:321px;width:159px;letter-spacing:-0.108px">2018.001.11800425</div>
<div class="cell" style="left:480px;width:51px;letter-spacing:-0.569px">LEASE...</div>
<div class="cell" style="left:531px;width:88px;letter-spacing:-0.24px">RF069052730...</div>
<div class="cell" style="left:619px;width:75px"></div>
<div class="cell" style="left:694px;width:78px"></div>
<div class="cell" style="left:772px;width:130px;letter-spacing:-0.122px">878</div>
<div class="cell" style="left:902px;width:130px"></div>
<div class="cell r" style="left:1032px;width:70px;letter-spacing:-0.102px">375,00</div>
<div class="cell r" style="left:1102px;width:76px;letter-spacing:-0.102px">375,00</div>
<div class="cell r" style="left:1178px;width:117px;letter-spacing:-0.092px">0,00</div>
<div class="cell" style="left:1295px;width:109px;letter-spacing:-0.122px">90527</div>
<div class="cell" style="left:1404px;width:132px;letter-spacing:-0.078px">20/12/2018 12:00:00 πμ</div>
</div>
<div class="drow" style="top:316px;color:#33c433">
<div class="cell" style="left:0px;width:169px;letter-spacing:-0.09px">17b04aa2-473b-4185-8ee8-55...</div>
<div class="cell" style="left:169px;width:152px;letter-spacing:-0.116px">420190327062648.0000</div>
<div class="cell" style="left:321px;width:159px;letter-spacing:-0.108px">2019.001.11900572</div>
<div class="cell" style="left:480px;width:51px;letter-spacing:-0.585px">ΒΡΑΚΑ...</div>
<div class="cell" style="left:531px;width:88px;letter-spacing:-0.24px">RF079052744...</div>
<div class="cell" style="left:619px;width:75px"></div>
<div class="cell" style="left:694px;width:78px;letter-spacing:-0.687px">CRBAGRAAX...</div>
<div class="cell" style="left:772px;width:130px;letter-spacing:-0.122px">12714</div>
<div class="cell" style="left:902px;width:130px;letter-spacing:-0.122px">16667</div>
<div class="cell r" style="left:1032px;width:70px;letter-spacing:-0.092px">1,23</div>
<div class="cell r" style="left:1102px;width:76px;letter-spacing:-0.092px">1,23</div>
<div class="cell r" style="left:1178px;width:117px;letter-spacing:-0.092px">0,00</div>
<div class="cell" style="left:1295px;width:109px;letter-spacing:-0.122px">90527</div>
<div class="cell" style="left:1404px;width:132px;letter-spacing:-0.076px">27/3/2019 12:00:00 πμ</div>
</div>
<div class="drow" style="top:337px;color:#f01010">
<div class="cell" style="left:0px;width:169px;letter-spacing:-0.07px">ed409b17-eeec-4166-a8f3-fb3...</div>
<div class="cell" style="left:169px;width:152px;letter-spacing:-0.116px">420190327061855.0000</div>
<div class="cell" style="left:321px;width:159px;letter-spacing:-0.108px">2019.001.11900571</div>
<div class="cell" style="left:480px;width:51px;letter-spacing:-0.585px">ΒΡΑΚΑ...</div>
<div class="cell" style="left:531px;width:88px;letter-spacing:-0.24px">RF739052764...</div>
<div class="cell" style="left:619px;width:75px"></div>
<div class="cell" style="left:694px;width:78px"></div>
<div class="cell" style="left:772px;width:130px;letter-spacing:-0.122px">12713</div>
<div class="cell" style="left:902px;width:130px"></div>
<div class="cell r" style="left:1032px;width:70px;letter-spacing:-0.098px">44,28</div>
<div class="cell r" style="left:1102px;width:76px;letter-spacing:-0.098px">44,28</div>
<div class="cell r" style="left:1178px;width:117px;letter-spacing:-0.092px">0,00</div>
<div class="cell" style="left:1295px;width:109px;letter-spacing:-0.122px">90527</div>
<div class="cell" style="left:1404px;width:132px;letter-spacing:-0.076px">27/3/2019 12:00:00 πμ</div>
</div>
<div class="drow" style="top:358px;color:#f01010">
<div class="cell" style="left:0px;width:169px;letter-spacing:-0.09px">84bb9769-a7d3-49ad-8899-81...</div>
<div class="cell" style="left:169px;width:152px;letter-spacing:-0.116px">420210417014824.0000</div>
<div class="cell" style="left:321px;width:159px;letter-spacing:-0.108px">2021.001.12100046</div>
<div class="cell" style="left:480px;width:51px;letter-spacing:-0.578px">ΚΑΡΑΣ...</div>
<div class="cell" style="left:531px;width:88px;letter-spacing:-0.24px">RF201234550...</div>
<div class="cell" style="left:619px;width:75px"></div>
<div class="cell" style="left:694px;width:78px"></div>
<div class="cell" style="left:772px;width:130px;letter-spacing:-0.201px">RF2012345504347110...</div>
<div class="cell" style="left:902px;width:130px"></div>
<div class="cell r" style="left:1032px;width:70px;letter-spacing:-0.102px">124,00</div>
<div class="cell r" style="left:1102px;width:76px;letter-spacing:-0.102px">124,00</div>
<div class="cell r" style="left:1178px;width:117px;letter-spacing:-0.092px">0,00</div>
<div class="cell" style="left:1295px;width:109px;letter-spacing:-0.122px">12345</div>
<div class="cell" style="left:1404px;width:132px;letter-spacing:-0.073px">17/4/2021 1:12:37 μμ</div>
</div>
<div class="drow" style="top:379px;color:#2282f0">
<div class="cell" style="left:0px;width:169px;letter-spacing:-0.09px">84bb9769-a7d3-49ad-8899-81...</div>
<div class="cell" style="left:169px;width:152px;letter-spacing:-0.116px">720210417015921.0000</div>
<div class="cell" style="left:321px;width:159px;letter-spacing:-0.108px">2021.001.12100046</div>
<div class="cell" style="left:480px;width:51px;letter-spacing:-0.578px">ΚΑΡΑΣ...</div>
<div class="cell" style="left:531px;width:88px;letter-spacing:-0.24px">RF101234557...</div>
<div class="cell" style="left:619px;width:75px"></div>
<div class="cell" style="left:694px;width:78px"></div>
<div class="cell" style="left:772px;width:130px;letter-spacing:-0.201px">RF1012345572021041...</div>
<div class="cell" style="left:902px;width:130px"></div>
<div class="cell r" style="left:1032px;width:70px;letter-spacing:-0.102px">124,00</div>
<div class="cell r" style="left:1102px;width:76px;letter-spacing:-0.102px">124,00</div>
<div class="cell r" style="left:1178px;width:117px;letter-spacing:-0.092px">0,00</div>
<div class="cell" style="left:1295px;width:109px;letter-spacing:-0.122px">12345</div>
<div class="cell" style="left:1404px;width:132px;letter-spacing:-0.073px">17/4/2021 2:00:22 μμ</div>
</div>
<div class="drow" style="top:400px;color:#2282f0">
<div class="cell" style="left:0px;width:169px;letter-spacing:-0.09px">84bb9769-a7d3-49ad-8899-81...</div>
<div class="cell" style="left:169px;width:152px;letter-spacing:-0.116px">720210417020335.0000</div>
<div class="cell" style="left:321px;width:159px;letter-spacing:-0.108px">2021.001.12100046</div>
<div class="cell" style="left:480px;width:51px;letter-spacing:-0.578px">ΚΑΡΑΣ...</div>
<div class="cell" style="left:531px;width:88px;letter-spacing:-0.24px">RF451234557...</div>
<div class="cell" style="left:619px;width:75px"></div>
<div class="cell" style="left:694px;width:78px"></div>
<div class="cell" style="left:772px;width:130px;letter-spacing:-0.201px">RF4512345572021041...</div>
<div class="cell" style="left:902px;width:130px"></div>
<div class="cell r" style="left:1032px;width:70px;letter-spacing:-0.102px">124,00</div>
<div class="cell r" style="left:1102px;width:76px;letter-spacing:-0.102px">124,00</div>
<div class="cell r" style="left:1178px;width:117px;letter-spacing:-0.092px">0,00</div>
<div class="cell" style="left:1295px;width:109px;letter-spacing:-0.122px">12345</div>
<div class="cell" style="left:1404px;width:132px;letter-spacing:-0.073px">17/4/2021 2:03:45 μμ</div>
</div>
<div class="drow" style="top:421px;color:#2282f0">
<div class="cell" style="left:0px;width:169px;letter-spacing:-0.09px">84bb9769-a7d3-49ad-8899-81...</div>
<div class="cell" style="left:169px;width:152px;letter-spacing:-0.116px">720210613020219.0000</div>
<div class="cell" style="left:321px;width:159px;letter-spacing:-0.108px">2021.001.12100046</div>
<div class="cell" style="left:480px;width:51px;letter-spacing:-0.578px">ΚΑΡΑΣ...</div>
<div class="cell" style="left:531px;width:88px;letter-spacing:-0.24px">RF701234557...</div>
<div class="cell" style="left:619px;width:75px"></div>
<div class="cell" style="left:694px;width:78px"></div>
<div class="cell" style="left:772px;width:130px"></div>
<div class="cell" style="left:902px;width:130px"></div>
<div class="cell r" style="left:1032px;width:70px;letter-spacing:-0.102px">155,68</div>
<div class="cell r" style="left:1102px;width:76px;letter-spacing:-0.102px">155,68</div>
<div class="cell r" style="left:1178px;width:117px;letter-spacing:-0.092px">0,00</div>
<div class="cell" style="left:1295px;width:109px;letter-spacing:-0.122px">12345</div>
<div class="cell" style="left:1404px;width:132px;letter-spacing:-0.073px">13/6/2021 2:02:21 μμ</div>
</div>
<div class="drow" style="top:442px;color:#33c433">
<div class="cell" style="left:0px;width:169px;letter-spacing:-0.087px">72f8d193-3e5f-4e4e-9b55-856...</div>
<div class="cell" style="left:169px;width:152px;letter-spacing:-0.116px">720210719074852.0000</div>
<div class="cell" style="left:321px;width:159px;letter-spacing:-0.108px">2021.001.12100117</div>
<div class="cell" style="left:480px;width:51px;letter-spacing:-0.585px">ΒΡΑΚΑ...</div>
<div class="cell" style="left:531px;width:88px;letter-spacing:-0.24px">RF429153647...</div>
<div class="cell" style="left:619px;width:75px"></div>
<div class="cell" style="left:694px;width:78px;letter-spacing:-0.782px">PIRBGRAA</div>
<div class="cell" style="left:772px;width:130px;letter-spacing:-0.122px">22</div>
<div class="cell" style="left:902px;width:130px;letter-spacing:-0.136px">111111111111111111...</div>
<div class="cell r" style="left:1032px;width:70px;letter-spacing:-0.102px">620,00</div>
<div class="cell r" style="left:1102px;width:76px;letter-spacing:-0.102px">620,00</div>
<div class="cell r" style="left:1178px;width:117px;letter-spacing:-0.102px">620,00</div>
<div class="cell" style="left:1295px;width:109px;letter-spacing:-0.122px">91536</div>
<div class="cell" style="left:1404px;width:132px;letter-spacing:-0.073px">19/7/2021 7:48:58 μμ</div>
</div>
<div class="grow ng" style="top:463px"><svg class="chev" width="9" height="6" viewBox="0 0 9 6"><path d="M1 1 L4.5 4.5 L8 1" fill="none" stroke="#4b5870" stroke-width="1.9"/></svg><span class="gtxt" style="letter-spacing:0.003px">DIAS_Είδος Κίνησης: Sales order (Αριθμός=9)</span></div>
<div class="drow" style="top:484px;color:#2282f0">
<div class="cell" style="left:0px;width:169px;letter-spacing:-0.066px">cebfc480-18fe-41e2-ae9e-c69...</div>
<div class="cell" style="left:169px;width:152px;letter-spacing:-0.116px">42018002502323.0000</div>
<div class="cell" style="left:321px;width:159px;letter-spacing:-0.15px">2018.002.Y502323</div>
<div class="cell" style="left:480px;width:51px;letter-spacing:-0.585px">ΠΑΠΑΓ...</div>
<div class="cell" style="left:531px;width:88px;letter-spacing:-0.24px">RF349052780...</div>
<div class="cell" style="left:619px;width:75px"></div>
<div class="cell" style="left:694px;width:78px"></div>
<div class="cell" style="left:772px;width:130px;letter-spacing:-0.122px">875</div>
<div class="cell" style="left:902px;width:130px"></div>
<div class="cell r" style="left:1032px;width:70px;letter-spacing:-0.092px">0,00</div>
<div class="cell r" style="left:1102px;width:76px;letter-spacing:-0.092px">0,00</div>
<div class="cell r" style="left:1178px;width:117px;letter-spacing:-0.092px">0,00</div>
<div class="cell" style="left:1295px;width:109px;letter-spacing:-0.122px">90527</div>
<div class="cell" style="left:1404px;width:132px;letter-spacing:-0.078px">15/12/2018 12:00:00 πμ</div>
</div>
<div class="drow" style="top:505px;color:#2282f0">
<div class="cell" style="left:0px;width:169px;letter-spacing:-0.083px">e9a099b9-c5d1-45fc-a749-985...</div>
<div class="cell" style="left:169px;width:152px;letter-spacing:-0.116px">42018001502355.0000</div>
<div class="cell" style="left:321px;width:159px;letter-spacing:-0.107px">2018.001.1502355</div>
<div class="cell" style="left:480px;width:51px;letter-spacing:-0.568px">ΓΚΑΒΑ...</div>
<div class="cell" style="left:531px;width:88px;letter-spacing:-0.24px">RF939052780...</div>
<div class="cell" style="left:619px;width:75px"></div>
<div class="cell" style="left:694px;width:78px"></div>
<div class="cell" style="left:772px;width:130px;letter-spacing:-0.122px">869</div>
<div class="cell" style="left:902px;width:130px"></div>
<div class="cell r" style="left:1032px;width:70px;letter-spacing:-0.092px">0,00</div>
<div class="cell r" style="left:1102px;width:76px;letter-spacing:-0.092px">0,00</div>
<div class="cell r" style="left:1178px;width:117px;letter-spacing:-0.092px">0,00</div>
<div class="cell" style="left:1295px;width:109px;letter-spacing:-0.122px">90527</div>
<div class="cell" style="left:1404px;width:132px;letter-spacing:-0.078px">15/12/2018 12:00:00 πμ</div>
</div>
<div class="drow" style="top:526px;color:#2282f0">
<div class="cell" style="left:0px;width:169px;letter-spacing:-0.087px">0aa03f17-26ab-40e9-9f30-420...</div>
<div class="cell" style="left:169px;width:152px;letter-spacing:-0.116px">42018001502356.0000</div>
<div class="cell" style="left:321px;width:159px;letter-spacing:-0.107px">2018.001.1502356</div>
<div class="cell" style="left:480px;width:51px;letter-spacing:-0.619px">ΜΑΚΡΗ...</div>
<div class="cell" style="left:531px;width:88px;letter-spacing:-0.24px">RF669052780...</div>
<div class="cell" style="left:619px;width:75px"></div>
<div class="cell" style="left:694px;width:78px"></div>
<div class="cell" style="left:772px;width:130px;letter-spacing:-0.122px">874</div>
<div class="cell" style="left:902px;width:130px"></div>
<div class="cell r" style="left:1032px;width:70px;letter-spacing:-0.092px">0,00</div>
<div class="cell r" style="left:1102px;width:76px;letter-spacing:-0.092px">0,00</div>
<div class="cell r" style="left:1178px;width:117px;letter-spacing:-0.092px">0,00</div>
<div class="cell" style="left:1295px;width:109px;letter-spacing:-0.122px">90527</div>
<div class="cell" style="left:1404px;width:132px;letter-spacing:-0.078px">15/12/2018 12:00:00 πμ</div>
</div>
<div class="drow" style="top:547px;color:#2282f0">
<div class="cell" style="left:0px;width:169px;letter-spacing:-0.086px">1aeb310e-2294-42ad-8878-c4...</div>
<div class="cell" style="left:169px;width:152px;letter-spacing:-0.116px">42018001502321.0000</div>
<div class="cell" style="left:321px;width:159px;letter-spacing:-0.107px">2018.001.1502321</div>
<div class="cell" style="left:480px;width:51px;letter-spacing:-0.601px">ΘΑΝΟ...</div>
<div class="cell" style="left:531px;width:88px;letter-spacing:-0.24px">RF419052780...</div>
<div class="cell" style="left:619px;width:75px"></div>
<div class="cell" style="left:694px;width:78px"></div>
<div class="cell" style="left:772px;width:130px;letter-spacing:-0.122px">876</div>
<div class="cell" style="left:902px;width:130px"></div>
<div class="cell r" style="left:1032px;width:70px;letter-spacing:-0.092px">0,00</div>
<div class="cell r" style="left:1102px;width:76px;letter-spacing:-0.092px">0,00</div>
<div class="cell r" style="left:1178px;width:117px;letter-spacing:-0.092px">0,00</div>
<div class="cell" style="left:1295px;width:109px;letter-spacing:-0.122px">90527</div>
<div class="cell" style="left:1404px;width:132px;letter-spacing:-0.078px">15/12/2018 12:00:00 πμ</div>
</div>
<div class="drow" style="top:568px;color:#2282f0">
<div class="cell" style="left:0px;width:169px;letter-spacing:-0.079px">b83c421d-b7e1-46cb-b6c7-721...</div>
<div class="cell" style="left:169px;width:152px;letter-spacing:-0.116px">720210417031114.0000</div>
<div class="cell" style="left:321px;width:159px;letter-spacing:-0.107px">2021.001.1502564</div>
<div class="cell" style="left:480px;width:51px;letter-spacing:-0.578px">ΚΑΡΑΣ...</div>
<div class="cell" style="left:531px;width:88px;letter-spacing:-0.24px">RF531234587...</div>
<div class="cell" style="left:619px;width:75px"></div>
<div class="cell" style="left:694px;width:78px"></div>
<div class="cell" style="left:772px;width:130px;letter-spacing:-0.201px">RF5312345872021041...</div>
<div class="cell" style="left:902px;width:130px"></div>
<div class="cell r" style="left:1032px;width:70px;letter-spacing:-0.092px">0,00</div>
<div class="cell r" style="left:1102px;width:76px;letter-spacing:-0.092px">0,00</div>
<div class="cell r" style="left:1178px;width:117px;letter-spacing:-0.092px">0,00</div>
<div class="cell" style="left:1295px;width:109px;letter-spacing:-0.122px">12345</div>
<div class="cell" style="left:1404px;width:132px;letter-spacing:-0.073px">17/4/2021 3:11:28 μμ</div>
</div>
<div class="drow" style="top:589px;color:#f01010">
<div class="cell" style="left:0px;width:169px;letter-spacing:-0.081px">4d3edac1-281e-4973-a060-5e...</div>
<div class="cell" style="left:169px;width:152px;letter-spacing:-0.116px">720210513021039.0000</div>
<div class="cell" style="left:321px;width:159px;letter-spacing:-0.107px">2020.001.1502565</div>
<div class="cell" style="left:480px;width:51px;letter-spacing:-0.585px">ΒΡΑΚΑ...</div>
<div class="cell" style="left:531px;width:88px;letter-spacing:-0.24px">RF431234587...</div>
<div class="cell" style="left:619px;width:75px"></div>
<div class="cell" style="left:694px;width:78px"></div>
<div class="cell" style="left:772px;width:130px;letter-spacing:-0.201px">RF4312345872021051...</div>
<div class="cell" style="left:902px;width:130px"></div>
<div class="cell r" style="left:1032px;width:70px;letter-spacing:-0.092px">0,00</div>
<div class="cell r" style="left:1102px;width:76px;letter-spacing:-0.092px">0,00</div>
<div class="cell r" style="left:1178px;width:117px;letter-spacing:-0.092px">0,00</div>
<div class="cell" style="left:1295px;width:109px;letter-spacing:-0.122px">12345</div>
<div class="cell" style="left:1404px;width:132px;letter-spacing:-0.073px">13/5/2021 2:10:46 μμ</div>
</div>
<div class="drow" style="top:610px;color:#f01010">
<div class="cell" style="left:0px;width:169px;letter-spacing:-0.098px">9314e7a7-547e-4801-a344-56...</div>
<div class="cell" style="left:169px;width:152px;letter-spacing:-0.116px">720210513021206.0000</div>
<div class="cell" style="left:321px;width:159px;letter-spacing:-0.107px">2021.001.1502566</div>
<div class="cell" style="left:480px;width:51px;letter-spacing:-0.585px">ΒΡΑΚΑ...</div>
<div class="cell" style="left:531px;width:88px;letter-spacing:-0.24px">RF931234587...</div>
<div class="cell" style="left:619px;width:75px"></div>
<div class="cell" style="left:694px;width:78px"></div>
<div class="cell" style="left:772px;width:130px;letter-spacing:-0.201px">RF9312345872021051...</div>
<div class="cell" style="left:902px;width:130px"></div>
<div class="cell r" style="left:1032px;width:70px;letter-spacing:-0.092px">0,00</div>
<div class="cell r" style="left:1102px;width:76px;letter-spacing:-0.092px">0,00</div>
<div class="cell r" style="left:1178px;width:117px;letter-spacing:-0.092px">0,00</div>
<div class="cell" style="left:1295px;width:109px;letter-spacing:-0.122px">12345</div>
<div class="cell" style="left:1404px;width:132px;letter-spacing:-0.073px">13/5/2021 2:12:18 μμ</div>
</div>
<div class="drow" style="top:631px;color:#000000">
<div class="cell" style="left:0px;width:169px;letter-spacing:-0.098px">5e58412d-49bb-4387-9732-77...</div>
<div class="cell" style="left:169px;width:152px;letter-spacing:-0.116px">720210513041633.0000</div>
<div class="cell" style="left:321px;width:159px;letter-spacing:-0.107px">2021.001.1502568</div>
<div class="cell" style="left:480px;width:51px;letter-spacing:-0.585px">ΒΡΑΚΑ...</div>
<div class="cell" style="left:531px;width:88px;letter-spacing:-0.24px">RF091234587...</div>
<div class="cell" style="left:619px;width:75px;letter-spacing:-0.57px">ΕΘΝΙΚΗ ΤΡ...</div>
<div class="cell" style="left:694px;width:78px;letter-spacing:-0.841px">ETHNGRAA</div>
<div class="cell" style="left:772px;width:130px;letter-spacing:-0.122px">0987654321</div>
<div class="cell" style="left:902px;width:130px;letter-spacing:-0.122px">1234567890</div>
<div class="cell r" style="left:1032px;width:70px;letter-spacing:-0.092px">0,00</div>
<div class="cell r" style="left:1102px;width:76px;letter-spacing:-0.092px">0,00</div>
<div class="cell r" style="left:1178px;width:117px;letter-spacing:-0.098px">10,00</div>
<div class="cell" style="left:1295px;width:109px;letter-spacing:-0.122px">12345</div>
<div class="cell" style="left:1404px;width:132px;letter-spacing:-0.073px">13/5/2021 4:16:34 μμ</div>
</div>
<div class="drow" style="top:652px;color:#33c433">
<div class="cell" style="left:0px;width:169px;letter-spacing:-0.07px">aa5da975-f80c-400e-a9cf-f39...</div>
<div class="cell" style="left:169px;width:152px;letter-spacing:-0.116px">720210719072310.0000</div>
<div class="cell" style="left:321px;width:159px;letter-spacing:-0.107px">2021.001.1502567</div>
<div class="cell" style="left:480px;width:51px;letter-spacing:-0.585px">ΒΡΑΚΑ...</div>
<div class="cell" style="left:531px;width:88px;letter-spacing:-0.24px">RF879153687...</div>
<div class="cell" style="left:619px;width:75px"></div>
<div class="cell" style="left:694px;width:78px;letter-spacing:-0.85px">CRBAGRAA</div>
<div class="cell" style="left:772px;width:130px;letter-spacing:-0.122px">09876543210987654321</div>
<div class="cell" style="left:902px;width:130px;letter-spacing:-0.122px">12345678901234567890</div>
<div class="cell r" style="left:1032px;width:70px;letter-spacing:-0.092px">0,00</div>
<div class="cell r" style="left:1102px;width:76px;letter-spacing:-0.092px">0,00</div>
<div class="cell r" style="left:1178px;width:117px;letter-spacing:-0.092px">4.500,00</div>
<div class="cell" style="left:1295px;width:109px;letter-spacing:-0.122px">91536</div>
<div class="cell" style="left:1404px;width:132px;letter-spacing:-0.073px">19/7/2021 7:23:48 μμ</div>
</div>
<div class="grow ng" style="top:673px"><svg class="chev" width="9" height="6" viewBox="0 0 9 6"><path d="M1 1 L4.5 4.5 L8 1" fill="none" stroke="#4b5870" stroke-width="1.9"/></svg><span class="gtxt" style="letter-spacing:0.01px">DIAS_Είδος Κίνησης: Invoicing (Αριθμός=5)</span></div>
<div class="drow" style="top:694px;color:#2282f0">
<div class="cell" style="left:0px;width:169px;letter-spacing:-0.079px">f66bdc75-514e-4b29-a396-cc5...</div>
<div class="cell" style="left:169px;width:152px;letter-spacing:-0.116px">720210514124542.0000</div>
<div class="cell" style="left:321px;width:159px;letter-spacing:-0.137px">2021.001.11111,A000127</div>
<div class="cell" style="left:480px;width:51px;letter-spacing:-0.578px">ΚΑΡΑΣ...</div>
<div class="cell" style="left:531px;width:88px;letter-spacing:-0.24px">RF331234577...</div>
<div class="cell" style="left:619px;width:75px"></div>
<div class="cell" style="left:694px;width:78px"></div>
<div class="cell" style="left:772px;width:130px;letter-spacing:-0.201px">RF3312345772021051...</div>
<div class="cell" style="left:902px;width:130px"></div>
<div class="cell r" style="left:1032px;width:70px;letter-spacing:-0.102px">342,55</div>
<div class="cell r" style="left:1102px;width:76px;letter-spacing:-0.102px">342,55</div>
<div class="cell r" style="left:1178px;width:117px;letter-spacing:-0.092px">0,00</div>
<div class="cell" style="left:1295px;width:109px;letter-spacing:-0.122px">12345</div>
<div class="cell" style="left:1404px;width:132px;letter-spacing:-0.076px">14/5/2021 12:46:04 πμ</div>
</div>
<div class="drow" style="top:715px;color:#33c433">
<div class="cell" style="left:0px;width:169px;letter-spacing:-0.075px">c44379fa-c222-4d67-bdda-3a3...</div>
<div class="cell" style="left:169px;width:152px;letter-spacing:-0.116px">720210514074645.0000</div>
<div class="cell" style="left:321px;width:159px;letter-spacing:-0.217px">2021.001.11ΠΩ3Α000002</div>
<div class="cell" style="left:480px;width:51px;letter-spacing:-0.578px">ΚΑΡΑΣ...</div>
<div class="cell" style="left:531px;width:88px;letter-spacing:-0.24px">RF191234577...</div>
<div class="cell" style="left:619px;width:75px;letter-spacing:-0.606px">ΑΛΦΑ ΤΡΑΠ...</div>
<div class="cell" style="left:694px;width:78px;letter-spacing:-0.85px">CRBAGRAA</div>
<div class="cell" style="left:772px;width:130px;letter-spacing:-0.122px">0987654321098</div>
<div class="cell" style="left:902px;width:130px;letter-spacing:-0.122px">12345678901234</div>
<div class="cell r" style="left:1032px;width:70px;letter-spacing:-0.102px">210,80</div>
<div class="cell r" style="left:1102px;width:76px;letter-spacing:-0.102px">210,80</div>
<div class="cell r" style="left:1178px;width:117px;letter-spacing:-0.095px">21.080,00</div>
<div class="cell" style="left:1295px;width:109px;letter-spacing:-0.122px">12345</div>
<div class="cell" style="left:1404px;width:132px;letter-spacing:-0.073px">14/5/2021 7:46:46 πμ</div>
</div>
<div class="drow" style="top:736px;color:#2282f0">
<div class="cell" style="left:0px;width:169px;letter-spacing:-0.075px">e4f76146-962d-4bf5-abad-e72...</div>
<div class="cell" style="left:169px;width:152px;letter-spacing:-0.116px">720210613020315.0000</div>
<div class="cell" style="left:321px;width:159px;letter-spacing:-0.111px">2021.001.111575000578</div>
<div class="cell" style="left:480px;width:51px;letter-spacing:-0.578px">ΚΑΡΑΣ...</div>
<div class="cell" style="left:531px;width:88px;letter-spacing:-0.24px">RF971234557...</div>
<div class="cell" style="left:619px;width:75px"></div>
<div class="cell" style="left:694px;width:78px"></div>
<div class="cell" style="left:772px;width:130px"></div>
<div class="cell" style="left:902px;width:130px"></div>
<div class="cell r" style="left:1032px;width:70px;letter-spacing:-0.102px">155,68</div>
<div class="cell r" style="left:1102px;width:76px;letter-spacing:-0.102px">155,68</div>
<div class="cell r" style="left:1178px;width:117px;letter-spacing:-0.092px">0,00</div>
<div class="cell" style="left:1295px;width:109px;letter-spacing:-0.122px">12345</div>
<div class="cell" style="left:1404px;width:132px;letter-spacing:-0.073px">13/6/2021 2:03:17 μμ</div>
</div>
<div class="drow" style="top:757px;color:#2282f0">
<div class="cell" style="left:0px;width:169px;letter-spacing:-0.066px">cb22b07d-9f66-4ff1-aa6e-c3a...</div>
<div class="cell" style="left:169px;width:152px;letter-spacing:-0.116px">720210709021743.0000</div>
<div class="cell" style="left:321px;width:159px;letter-spacing:-0.19px">2021.001.11ΑΓ1Χας2122</div>
<div class="cell" style="left:480px;width:51px;letter-spacing:-0.578px">ΚΑΡΑΣ...</div>
<div class="cell" style="left:531px;width:88px;letter-spacing:-0.24px">RF591234527...</div>
<div class="cell" style="left:619px;width:75px"></div>
<div class="cell" style="left:694px;width:78px"></div>
<div class="cell" style="left:772px;width:130px"></div>
<div class="cell" style="left:902px;width:130px"></div>
<div class="cell r" style="left:1032px;width:70px;letter-spacing:-0.095px">20.594,00</div>
<div class="cell r" style="left:1102px;width:76px;letter-spacing:-0.095px">20.594,00</div>
<div class="cell r" style="left:1178px;width:117px;letter-spacing:-0.092px">0,00</div>
<div class="cell" style="left:1295px;width:109px;letter-spacing:-0.122px">12345</div>
<div class="cell" style="left:1404px;width:132px;letter-spacing:-0.071px">9/7/2021 2:17:45 μμ</div>
</div>
<div class="drow foc" style="top:778px;color:#33c433">
<div class="cell" style="left:0px;width:169px;letter-spacing:-0.091px">15d95686-1f96-43fc-9e7b-523...</div>
<div class="cell hl" style="left:169px;width:152px;letter-spacing:-0.116px">720210719075251.0000</div>
<div class="cell hl" style="left:321px;width:159px;letter-spacing:-0.137px">2021.001.11111,A000142</div>
<div class="cell hl" style="left:480px;width:51px;letter-spacing:-0.585px">ΒΡΑΚΑ...</div>
<div class="cell hl" style="left:531px;width:88px;letter-spacing:-0.24px">RF829153657...</div>
<div class="cell hl" style="left:619px;width:75px"></div>
<div class="cell hl" style="left:694px;width:78px;letter-spacing:-0.841px">ETHNGRAA</div>
<div class="cell hl" style="left:772px;width:130px;letter-spacing:-0.122px">222222</div>
<div class="cell hl" style="left:902px;width:130px;letter-spacing:-0.122px">111111</div>
<div class="cell r hl" style="left:1032px;width:70px;letter-spacing:-0.102px">124,00</div>
<div class="cell r hl" style="left:1102px;width:76px;letter-spacing:-0.102px">124,00</div>
<div class="cell r hl" style="left:1178px;width:117px;letter-spacing:-0.102px">124,00</div>
<div class="cell hl" style="left:1295px;width:109px;letter-spacing:-0.122px">91536</div>
<div class="cell hl" style="left:1404px;width:132px;letter-spacing:-0.073px">19/7/2021 7:53:08 μμ</div>
</div>
<div class="grow ng" style="top:799px"><svg class="chev" width="9" height="6" viewBox="0 0 9 6"><path d="M1 1 L4.5 4.5 L8 1" fill="none" stroke="#4b5870" stroke-width="1.9"/></svg><span class="gtxt" style="letter-spacing:0.022px">DIAS_Είδος Κίνησης: Axiografa (Αριθμός=3)</span></div>
<div class="drow" style="top:820px;color:#2282f0">
<div class="cell" style="left:0px;width:169px;letter-spacing:-0.09px">3b531e38-6e68-4685-a99a-6c...</div>
<div class="cell" style="left:169px;width:152px;letter-spacing:-0.116px">720210514014817.0000</div>
<div class="cell" style="left:321px;width:159px"></div>
<div class="cell" style="left:480px;width:51px;letter-spacing:-0.578px">ΚΑΡΑΣ...</div>
<div class="cell" style="left:531px;width:88px;letter-spacing:-0.24px">RF801234587...</div>
<div class="cell" style="left:619px;width:75px"></div>
<div class="cell" style="left:694px;width:78px"></div>
<div class="cell" style="left:772px;width:130px"></div>
<div class="cell" style="left:902px;width:130px"></div>
<div class="cell r" style="left:1032px;width:70px;letter-spacing:-0.092px">0,00</div>
<div class="cell r" style="left:1102px;width:76px;letter-spacing:-0.092px">0,00</div>
<div class="cell r" style="left:1178px;width:117px;letter-spacing:-0.092px">0,00</div>
<div class="cell" style="left:1295px;width:109px;letter-spacing:-0.122px">12345</div>
<div class="cell" style="left:1404px;width:132px;letter-spacing:-0.073px">14/5/2021 1:48:26 πμ</div>
</div>
<div class="drow" style="top:841px;color:#000000">
<div class="cell" style="left:0px;width:169px;letter-spacing:-0.075px">8e928090-cac1-482b-b1a3-fcd...</div>
<div class="cell" style="left:169px;width:152px;letter-spacing:-0.116px">720210514014942.0000</div>
<div class="cell" style="left:321px;width:159px"></div>
<div class="cell" style="left:480px;width:51px;letter-spacing:-0.578px">ΚΑΡΑΣ...</div>
<div class="cell" style="left:531px;width:88px;letter-spacing:-0.24px">RF031234587...</div>
<div class="cell" style="left:619px;width:75px"></div>
<div class="cell" style="left:694px;width:78px;letter-spacing:-0.841px">ERBKGRAA</div>
<div class="cell" style="left:772px;width:130px;letter-spacing:-0.122px">09876543210987</div>
<div class="cell" style="left:902px;width:130px;letter-spacing:-0.122px">123456789012345</div>
<div class="cell r" style="left:1032px;width:70px;letter-spacing:-0.092px">0,00</div>
<div class="cell r" style="left:1102px;width:76px;letter-spacing:-0.092px">0,00</div>
<div class="cell r" style="left:1178px;width:117px;letter-spacing:-0.102px">350,00</div>
<div class="cell" style="left:1295px;width:109px;letter-spacing:-0.122px">12345</div>
<div class="cell" style="left:1404px;width:132px;letter-spacing:-0.073px">14/5/2021 1:49:46 πμ</div>
</div>
<svg class="abs" style="left:324px;top:785px" width="5" height="8" viewBox="0 0 5 8"><path d="M0 0 L5 4 L0 8 Z" fill="#111"/></svg>
<div class="focline" style="top:778px"></div>
<div class="focline" style="top:797px"></div>
<div class="focside" style="top:778px"></div>
<svg class="abs" style="left:0;top:0;pointer-events:none" width="1891" height="859"><path fill-rule="evenodd" fill="#ff0000" d="M242.8 18.9 H611.3 Q620.3 18.9 620.3 27.9 V59 Q620.3 68 611.3 68 H242.8 Q233.8 68 233.8 59 V27.9 Q233.8 18.9 242.8 18.9 Z M245.7 30.4 H608.5 Q609 30.4 609 30.9 V56.3 Q609 56.8 608.5 56.8 H245.7 Q245.2 56.8 245.2 56.3 V30.9 Q245.2 30.4 245.7 30.4 Z"/><path fill-rule="evenodd" fill="#ff0000" d="M15.4 645 H303.5 Q312 645 312 653.5 V687.5 Q312 696 303.5 696 H15.4 Q6.9 696 6.9 687.5 V653.5 Q6.9 645 15.4 645 Z M18.4 656 H300.4 Q300.9 656 300.9 656.5 V684.4 Q300.9 684.9 300.4 684.9 H18.4 Q17.9 684.9 17.9 684.4 V656.5 Q17.9 656 18.4 656 Z"/><path d="M348 188.8 L673 188.8" stroke="#ff0000" stroke-width="11" stroke-linecap="round"/><path d="M349 484 L677 484.5" stroke="#ff0000" stroke-width="10.8" stroke-linecap="round"/><path d="M344 696 L674 696.5" stroke="#ff0000" stroke-width="12" stroke-linecap="round"/><path d="M346 822.5 L674 822.5" stroke="#ff0000" stroke-width="10" stroke-linecap="round"/></svg></body></html>
